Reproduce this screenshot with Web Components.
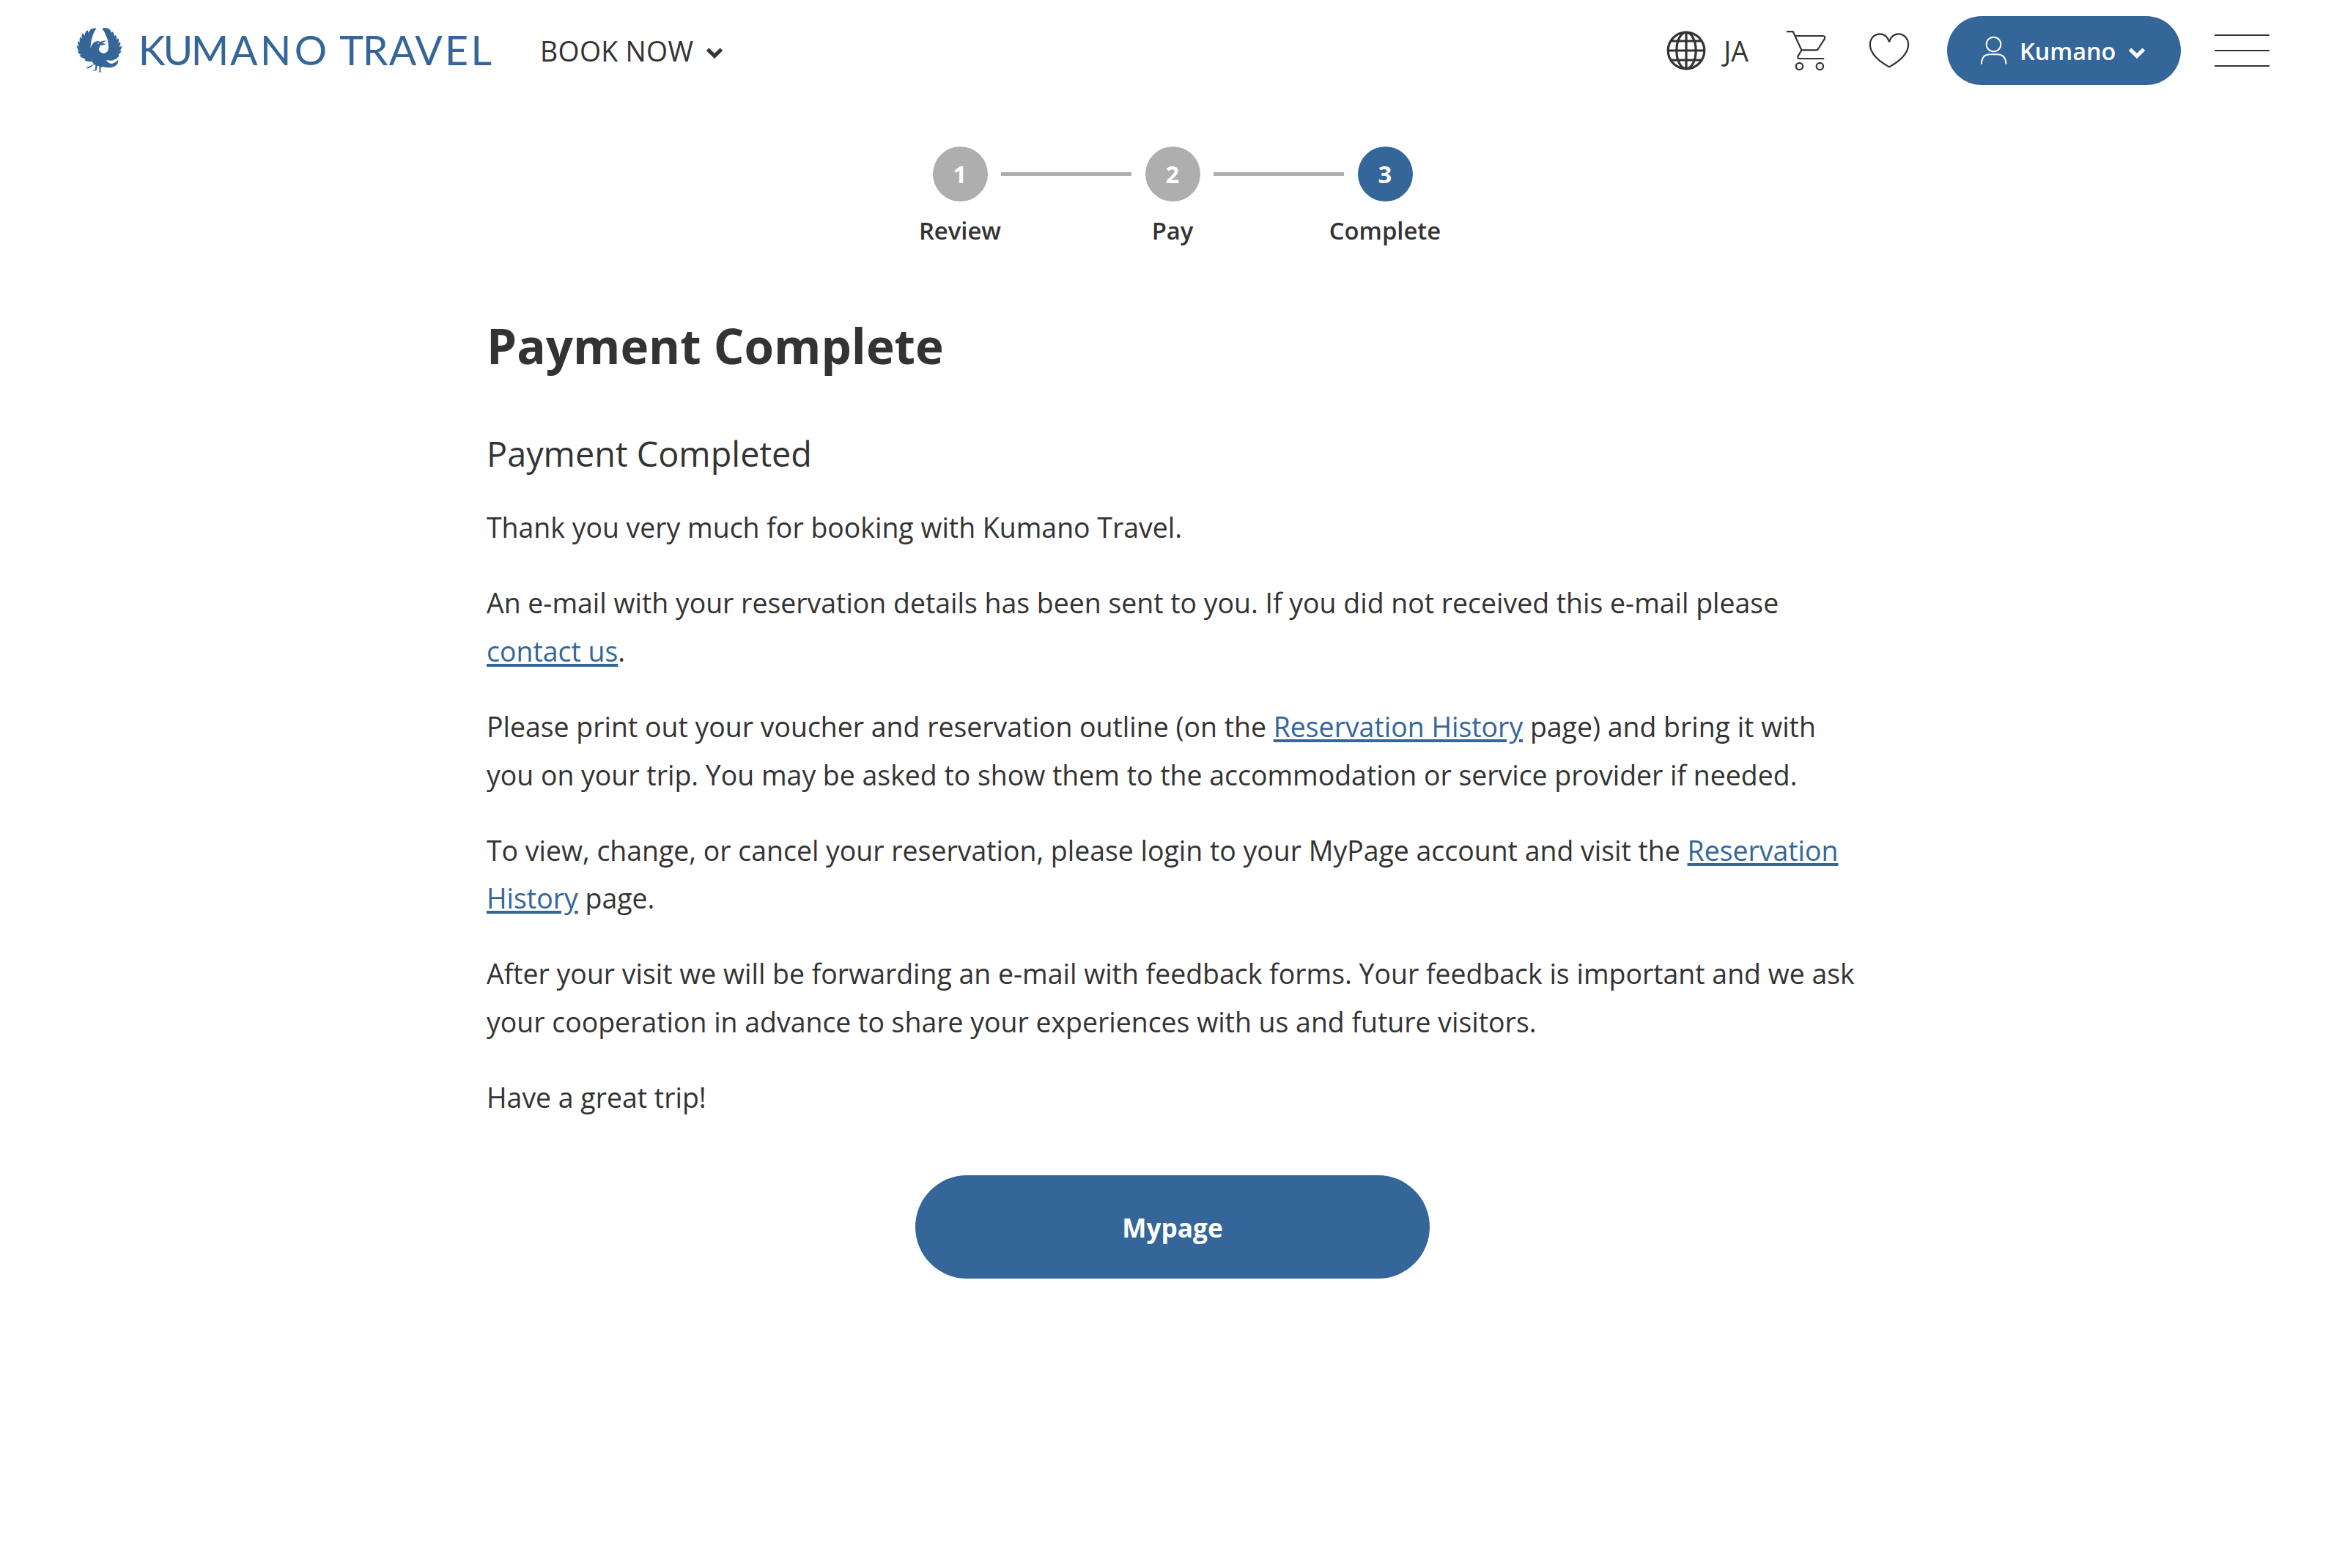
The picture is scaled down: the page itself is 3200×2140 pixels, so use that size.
<!DOCTYPE html>
<html lang="en">
<head>
<meta charset="utf-8">
<title>Payment Complete | KUMANO TRAVEL</title>
<style>
    body {
        margin: 0;
        background: #fff;
        color: #333;
        font-family: "Open Sans", "Noto Sans", sans-serif;
        font-size: 37.44px;
        --blue: #346699;
        --gray: #aeaeae;
    }
    main { width: 1875px; margin: 0 auto; }
    h1 { margin: 89px 0 66px; font-size: 65.55px; line-height: 92px; font-weight: 700; }
    h2 { margin: 0 0 33px; font-size: 46.8px; line-height: 70.3px; font-weight: 400; }
    p { margin: 0 0 37.5px; line-height: 65.6px; }
    p a {
        color: var(--blue);
        text-decoration: underline;
        text-decoration-thickness: 3.5px;
        text-underline-offset: 2.5px;
    }
    h1, h2, p { padding-left: 1.5px; }
</style>
</head>
<body>
<site-header>
    <kumano-logo slot="logo"></kumano-logo>
    <span slot="nav">BOOK NOW</span>
    <span slot="lang">JA</span>
    <span slot="user">Kumano</span>
</site-header>
<main>
    <step-list>
        <step-item number="1">Review</step-item>
        <step-item number="2">Pay</step-item>
        <step-item number="3" current>Complete</step-item>
    </step-list>
    <h1>Payment Complete</h1>
    <h2>Payment Completed</h2>
    <p>Thank you very much for booking with Kumano Travel.</p>
    <p>An e-mail with your reservation details has been sent to you. If you did not received this e-mail please <a href="#">contact us</a>.</p>
    <p>Please print out your voucher and reservation outline (on the <a href="#">Reservation History</a> page) and bring it with you on your trip. You may be asked to show them to the accommodation or service provider if needed.</p>
    <p>To view, change, or cancel your reservation, please login to your MyPage account and visit the <a href="#">Reservation History</a> page.</p>
    <p>After your visit we will be forwarding an e-mail with feedback forms. Your feedback is important and we ask your cooperation in advance to share your experiences with us and future visitors.</p>
    <p>Have a great trip!</p>
    <round-button>Mypage</round-button>
</main>

<script>
const icons = {
    chevron: `<svg width="24" height="18" viewBox="0 0 24 18"><path d="M2.6 3.2 12 12.4l9.4-9.2" fill="none" stroke="currentColor" stroke-width="5"/></svg>`,
    globe: `<svg width="54" height="54" viewBox="0 0 54 54" fill="none" stroke="currentColor" stroke-width="3.2">
        <circle cx="27" cy="27" r="24.8"/>
        <ellipse cx="27" cy="27" rx="13.2" ry="24.8"/>
        <path d="M27 2v50M2 27h50M6.5 14h41M6.5 40h41"/>
    </svg>`,
    cart: `<svg width="56" height="56" viewBox="0 0 56 56" fill="none" stroke="currentColor" stroke-width="2.2" stroke-linejoin="round">
        <path d="M1 2.2h8.8L21.5 27.5 16.6 35.3Q15.3 39 18.6 39h33.6"/>
        <path d="M12.4 8h38.1q4 .4 2.3 4.2L44.6 25q-1 2.3-3 2.3H21.5"/>
        <circle cx="18.5" cy="49.5" r="4.7"/>
        <circle cx="46.4" cy="49.5" r="4.7"/>
    </svg>`,
    heart: `<svg width="56" height="50" viewBox="0 0 56 50" fill="none" stroke="currentColor" stroke-width="2.2">
        <path d="M28 13.2C26.5 7 21.5 2.3 15.500 2.3 7.500 2.3 1.9 8.500 1.9 17 1.9 29.500 15 40.500 28 47.4 41 40.500 54.1 29.500 54.1 17 54.1 8.500 48.500 2.3 40.500 2.3 34.500 2.3 29.500 7 28 13.2Z"/>
    </svg>`,
    user: `<svg width="38" height="40" viewBox="0 0 38 40" fill="none" stroke="currentColor" stroke-width="2">
        <circle cx="18.5" cy="11.5" r="9.8"/>
        <path d="M1.9 38.5C2.2 29.5 6.500 25.2 13 25.2h11C30.500 25.2 35 29.5 35.500 38.5"/>
    </svg>`
};

class KumanoLogo extends HTMLElement {
    constructor() {
        super();
        this.attachShadow({ mode: 'open' });
    }

    connectedCallback() {
        // each letter gets its own x, the wordmark is spaced by eye
        this.shadowRoot.innerHTML = `
            <style>
                :host { display: block; width: 574px; height: 72px; color: var(--blue); }
                svg { display: block; overflow: visible; }
                text { font: 400 55.5px Lato, sans-serif; }
            </style>
            <svg width="574" height="72" viewBox="100 33 574 72" fill="currentColor">
                <g transform="translate(90 20) scale(.3333)">
                    <path d="M125 55Q115 70 108 90T100 138Q106 120 118 112 130 105 140 111L164 105Q160 112 148 116L164 121Q156 126 142 125 132 138 137 149 145 159 156 158 172 155 174 138 175 112 166 90T148 57Q158 51 172 56 183 60 186 74L191 69Q198 76 198 88L204 83Q210 92 207 103L214 96Q220 108 213 118L222 112Q226 122 217 133L228 128Q229 140 219 149L227 148Q225 159 215 164L218 170Q208 182 190 188L164 187Q172 198 184 201 200 199 213 187 217 196 206 207 194 218 170 217L150 214 143 216 142 232 148 237 140 234 130 238 137 231 136 211 128 209 125 229 120 232 121 228 106 231 120 224 121 206 112 204Q105 216 94 218L84 221 90 215 77 213 94 213Q106 208 113 201L107 192Q86 193 76 186L80 181Q64 178 55 167L62 165Q48 158 48 148L54 149Q44 138 45 126L53 131Q46 118 51 107L58 114Q53 101 59 91L66 100Q62 86 69 75L77 87Q76 72 88 63L93 74Q98 58 112 56Z"/>
                    <path d="M128 113l5 7 2-5" fill="none" stroke="#fff" stroke-width="2"/>
                </g>
                <text y="88.7" x="188.7 222.5 260.8 313.9 355 401.7 463.2 494.8 530.8 566.2 607 642.5">KUMANOTRAVEL</text>
            </svg>
        `;
    }
}

class SiteHeader extends HTMLElement {
    constructor() {
        super();
        this.attachShadow({ mode: 'open' });
    }

    connectedCallback() {
        this.shadowRoot.innerHTML = `
            <style>
                :host {
                    display: flex;
                    align-items: center;
                    height: 138px;
                    padding: 0 103px 0 100px;
                    box-sizing: border-box;
                }
                svg { display: block; flex: none; }
                .nav {
                    display: flex;
                    align-items: center;
                    gap: 17px;
                    margin-left: 63px;
                    font-weight: 500;
                    letter-spacing: .3px;
                }
                .tools { display: flex; align-items: center; margin-left: auto; }
                .lang { display: flex; align-items: center; gap: 24.5px; margin-right: 51px; }
                .heart { margin: 0 51px 0 57px; }
                .user {
                    display: flex;
                    align-items: center;
                    width: 319px;
                    height: 94px;
                    padding-left: 45px;
                    box-sizing: border-box;
                    border-radius: 47px;
                    background: var(--blue);
                    color: #fff;
                    font-size: 32.4px;
                    font-weight: 600;
                }
                .user .name { margin: 0 16.5px 0 16px; }
                .nav svg, .user svg:last-child { position: relative; top: 4px; }
                .menu { display: flex; flex-direction: column; gap: 18.7px; margin-left: 46px; }
                .menu i { width: 75px; height: 2.3px; background: #333; }
            </style>
            <slot name="logo"></slot>
            <div class="nav"><slot name="nav"></slot>${icons.chevron}</div>
            <div class="tools">
                <div class="lang">${icons.globe}<slot name="lang"></slot></div>
                ${icons.cart}
                <div class="heart">${icons.heart}</div>
                <div class="user">${icons.user}<span class="name"><slot name="user"></slot></span>${icons.chevron}</div>
                <div class="menu"><i></i><i></i><i></i></div>
            </div>
        `;
    }
}

class StepList extends HTMLElement {
    constructor() {
        super();
        this.attachShadow({ mode: 'open' });
        this.shadowRoot.innerHTML = `
            <style>
                :host {
                    display: grid;
                    grid-template-columns: repeat(3, 290px);
                    justify-content: center;
                    padding-top: 62px;
                }
            </style>
            <slot></slot>
        `;
    }
}

class StepItem extends HTMLElement {
    constructor() {
        super();
        this.attachShadow({ mode: 'open' });
    }

    connectedCallback() {
        this.shadowRoot.innerHTML = `
            <style>
                :host {
                    display: flex;
                    flex-direction: column;
                    gap: 18px;
                    font-size: 32.8px;
                    line-height: 44px;
                    font-weight: 600;
                    text-align: center;
                }
                .row { display: grid; grid-template-columns: 1fr 75px 1fr; align-items: center; column-gap: 18.5px; }
                .line { height: 5px; background: var(--gray); }
                :host(:first-child) .line:first-child, :host([current]) .line:last-child { visibility: hidden; }
                .line:first-child { margin-left: -.5px; }
                .num {
                    height: 75px;
                    line-height: 76px;
                    border-radius: 50%;
                    background: var(--gray);
                    color: #fff;
                    font-weight: 700;
                }
                :host([current]) .num { background: var(--blue); }
            </style>
            <div class="row">
                <span class="line"></span>
                <span class="num">${this.getAttribute('number')}</span>
                <span class="line"></span>
            </div>
            <div><slot></slot></div>
        `;
    }
}

class RoundButton extends HTMLElement {
    constructor() {
        super();
        this.attachShadow({ mode: 'open' });
        this.shadowRoot.innerHTML = `
            <style>
                :host { display: flex; justify-content: center; margin-top: 73.5px; }
                button {
                    width: 702px;
                    height: 141px;
                    padding: 0;
                    border: 0;
                    border-radius: 71px;
                    background: var(--blue);
                    color: #fff;
                    font: inherit;
                    font-size: 35.2px;
                    font-weight: 700;
                }
            </style>
            <button type="button"><slot></slot></button>
        `;
    }
}

customElements.define('kumano-logo', KumanoLogo);
customElements.define('site-header', SiteHeader);
customElements.define('step-list', StepList);
customElements.define('step-item', StepItem);
customElements.define('round-button', RoundButton);
</script>
</body>
</html>
